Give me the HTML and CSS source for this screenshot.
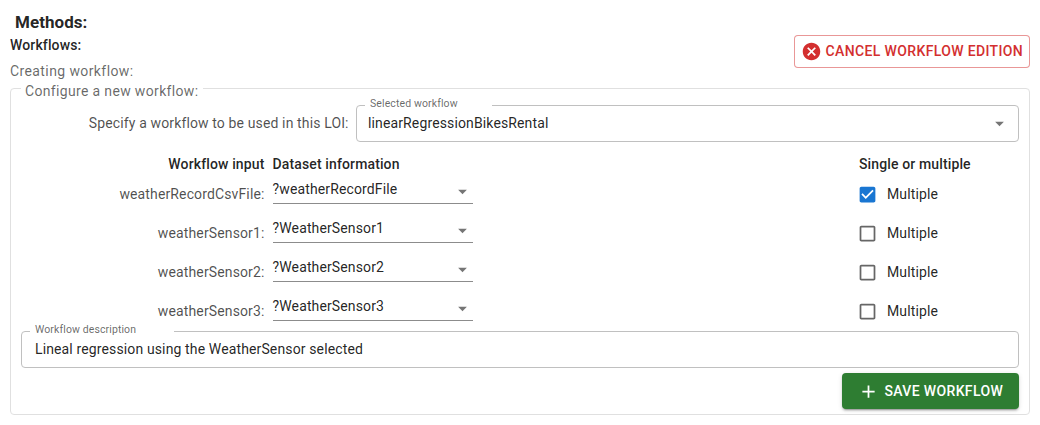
FILE: index.html
```html
<!DOCTYPE html>
<html lang="en">
<head>
<meta charset="utf-8">
<title>Methods</title>
<link rel="stylesheet" href="styles.css">
</head>
<body>
<main class="page">
  <header class="header">
    <div class="titles">
      <h1 class="title">Methods:</h1>
      <h2 class="subtitle">Workflows:</h2>
    </div>
    <button class="btn btn-cancel" type="button">
      <svg class="icon-cancel" viewBox="0 0 24 24"><path d="M12 2C6.47 2 2 6.47 2 12s4.47 10 10 10 10-4.47 10-10S17.53 2 12 2zm5 13.59L15.59 17 12 13.41 8.41 17 7 15.59 10.59 12 7 8.41 8.41 7 12 10.59 15.59 7 17 8.41 13.41 12 17 15.59z"/></svg>
      <span>CANCEL WORKFLOW EDITION</span>
    </button>
  </header>
  <p class="status">Creating workflow:</p>
  <fieldset class="panel">
    <legend class="panel-legend">Configure a new workflow:</legend>
    <div class="pick">
      <span class="label pick-label">Specify a workflow to be used in this LOI:</span>
      <fieldset class="field">
        <legend class="field-legend pick-legend">Selected workflow</legend>
        <div class="field-value"><span class="value-pick">linearRegressionBikesRental</span>
          <svg class="arrow" viewBox="0 0 24 24"><path d="M7 10l5 5 5-5z"/></svg></div>
      </fieldset>
    </div>
    <div class="grid head">
      <span class="name">Workflow input</span><span class="data-head">Dataset information</span><span class="multi-head">Single or multiple</span>
    </div>
    <div class="grid">
      <span class="label name">weatherRecordCsvFile:</span>
      <div class="select"><span>?weatherRecordFile</span><svg class="arrow" viewBox="0 0 24 24"><path d="M7 10l5 5 5-5z"/></svg></div>
      <div class="multi"><svg class="box checked" viewBox="0 0 24 24"><path d="M19 3H5c-1.11 0-2 .9-2 2v14c0 1.1.89 2 2 2h14c1.11 0 2-.9 2-2V5c0-1.1-.89-2-2-2zm-9 14l-5-5 1.41-1.41L10 14.17l7.59-7.59L19 8l-9 9z"/></svg><span>Multiple</span></div>
    </div>
    <div class="grid">
      <span class="label name">weatherSensor1:</span>
      <div class="select"><span>?WeatherSensor1</span><svg class="arrow" viewBox="0 0 24 24"><path d="M7 10l5 5 5-5z"/></svg></div>
      <div class="multi"><svg class="box" viewBox="0 0 24 24"><path d="M19 5v14H5V5h14m0-2H5c-1.1 0-2 .9-2 2v14c0 1.1.9 2 2 2h14c1.1 0 2-.9 2-2V5c0-1.1-.9-2-2-2z"/></svg><span>Multiple</span></div>
    </div>
    <div class="grid">
      <span class="label name">weatherSensor2:</span>
      <div class="select"><span>?WeatherSensor2</span><svg class="arrow" viewBox="0 0 24 24"><path d="M7 10l5 5 5-5z"/></svg></div>
      <div class="multi"><svg class="box" viewBox="0 0 24 24"><path d="M19 5v14H5V5h14m0-2H5c-1.1 0-2 .9-2 2v14c0 1.1.9 2 2 2h14c1.1 0 2-.9 2-2V5c0-1.1-.9-2-2-2z"/></svg><span>Multiple</span></div>
    </div>
    <div class="grid">
      <span class="label name">weatherSensor3:</span>
      <div class="select"><span>?WeatherSensor3</span><svg class="arrow" viewBox="0 0 24 24"><path d="M7 10l5 5 5-5z"/></svg></div>
      <div class="multi"><svg class="box" viewBox="0 0 24 24"><path d="M19 5v14H5V5h14m0-2H5c-1.1 0-2 .9-2 2v14c0 1.1.9 2 2 2h14c1.1 0 2-.9 2-2V5c0-1.1-.9-2-2-2z"/></svg><span>Multiple</span></div>
    </div>
    <fieldset class="field description">
      <legend class="field-legend desc-legend">Workflow description</legend>
      <div class="field-value"><span class="value-desc">Lineal regression using the WeatherSensor selected</span></div>
    </fieldset>
    <div class="actions">
      <button class="btn btn-save" type="button">
        <svg class="icon-add" viewBox="0 0 24 24"><path d="M19 13h-6v6h-2v-6H5v-2h6V5h2v6h6v2z"/></svg>
        <span>SAVE WORKFLOW</span>
      </button>
    </div>
  </fieldset>
</main>
</body>
</html>
```
FILE: styles.css
```css
* { box-sizing: border-box; }
body {
  margin: 0;
  background: #fff;
  color: rgba(0, 0, 0, 0.87);
  font-family: Roboto, sans-serif;
  font-size: 14px;
  line-height: 20px;
  letter-spacing: 0.13px;
}
h1, h2, p, fieldset { margin: 0; padding: 0; min-width: 0; }
svg { display: block; fill: currentColor; flex: none; }
.page { width: 1040px; padding: 10px 10px 0; }
.header { display: flex; justify-content: space-between; height: 51px; }
.title { padding-left: 5px; font-size: 17px; line-height: 25px; font-weight: 700; letter-spacing: 0.05px; }
.subtitle { font-size: 14px; line-height: 20px; font-weight: 500; letter-spacing: 0.13px; }
.btn {
  display: flex;
  align-items: center;
  border-radius: 4px;
  font: 500 14px/24px Roboto, sans-serif;
  letter-spacing: 0.36px;
  white-space: nowrap;
}
.btn-cancel {
  margin-top: 25px;
  width: 236px;
  height: 33px;
  padding: 0 0 1px 6px;
  gap: 3.6px;
  border: 1px solid rgba(211, 47, 47, 0.5);
  background: #fff;
  color: #d32f2f;
}
.icon-cancel { width: 21px; height: 21px; }
.status { color: rgba(0, 0, 0, 0.6); letter-spacing: 0.4px; }
.panel {
  height: 339px;
  margin-top: -5px;
  padding: 0 10px;
  border: 1px solid #e0e0e0;
  border-radius: 4px;
}
.panel-legend {
  margin-left: 0;
  padding: 5px 5px 0 4px;
  line-height: 20px;
  color: rgba(0, 0, 0, 0.6);
  letter-spacing: 0.34px;
}
.pick { display: flex; height: 43px; }
.pick-label { width: 328px; padding: 12px 0.4px 0 0; text-align: right; }
.label { color: rgba(0, 0, 0, 0.7); }
.field {
  border: 1px solid #c0c0c0;
  border-radius: 4px;
}
.pick .field { width: 663px; height: 44px; margin-left: 7px; margin-top: -3px; }
.field-legend {
  height: 14px;
  margin-left: 8px;
  padding-left: 5px;
  font-size: 10.5px;
  line-height: 12px;
  letter-spacing: 0.11px;
  color: rgba(0, 0, 0, 0.6);
}
.pick-legend { width: 127px; }
.desc-legend { width: 144px; }
.field-value { display: flex; justify-content: space-between; padding: 1px 8px 0 11px; height: 28px; letter-spacing: 0.13px; }
.arrow { width: 21px; height: 21px; color: rgba(0, 0, 0, 0.54); }
.grid {
  display: grid;
  grid-template-columns: 244px 200px 1fr 160px;
  column-gap: 8px;
  height: 39px;
}
.head { height: 31px; padding-top: 10px; font-weight: 500; }
.name { text-align: right; }
.grid .name { padding: 9px 0.5px 0 0; }
.head .name { padding-top: 0; }
.data-head { margin-left: -0.5px; }
.multi-head { grid-column: 4; }
.select { display: flex; justify-content: space-between; height: 29px; padding-top: 4px; border-bottom: 1px solid #8c8c8c; }
.select span { margin-left: -0.5px; }
.select .arrow { margin: 2px 0 0; }
.multi { grid-column: 4; display: flex; align-items: center; height: 37px; gap: 9px; }
.box { width: 21px; height: 21px; margin: 1px 0 0 -2px; color: rgba(0, 0, 0, 0.6); }
.checked { color: #1976d2; }
.description { width: 998px; height: 44px; margin-top: -7px; }
.description .field-value { padding-left: 13px; }
.actions { display: flex; justify-content: flex-end; padding-top: 5px; }
.btn-save {
  width: 177px;
  height: 36px;
  padding: 0 0 0 16px;
  gap: 5.4px;
  border: 0;
  background: #2e7d32;
  color: #fff;
  box-shadow: 0 3px 1px -2px rgba(0, 0, 0, 0.2), 0 2px 2px rgba(0, 0, 0, 0.14), 0 1px 5px rgba(0, 0, 0, 0.12);
}
.icon-add { width: 21px; height: 21px; }
```
